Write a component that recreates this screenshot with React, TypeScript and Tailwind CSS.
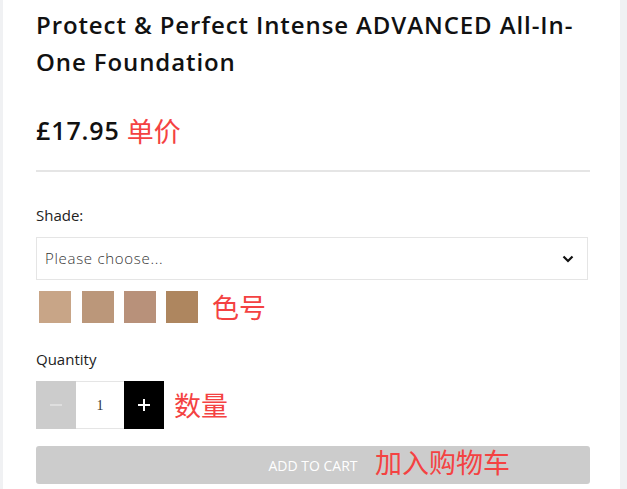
import React from "react";

const red = "text-[#f44242]";
const cjk = "font-['Noto_Sans_CJK_SC',sans-serif]";

export default function App() {
  return (
    <div className="w-full h-[489px] bg-[#f0f1f3] flex overflow-hidden font-['Open_Sans',sans-serif]">
      <div className="ml-[3px] w-[617px] h-full bg-white pl-[33px] pr-[30px] pt-[6px]">
        <h1 className="text-[24px] leading-[37px] font-semibold text-[#111] tracking-[0.9px]">
          Protect &amp; Perfect Intense ADVANCED All-In-One Foundation
        </h1>
        <div className="mt-[33px] flex items-center h-[36px]">
          <span className="text-[25px] font-semibold text-[#111] tracking-[0.9px]">£17.95</span>
          <span className={`ml-[7px] text-[27px] ${red} ${cjk}`}>单价</span>
        </div>
        <div className="mt-[21px] h-[2px] bg-[#e5e5e5]" />
        <div className="mt-[33px] text-[15px] text-[#222] leading-[20px]">Shade:</div>
        <div className="mt-[12px] mr-[2px] h-[43px] border border-[#e5e5e5] flex items-center justify-between pl-[8px] pr-[13px]">
          <span className="text-[15px] font-light text-[#333] tracking-[0.7px]">Please choose...</span>
          <svg width="12" height="8" viewBox="0 0 12 8" fill="none">
            <path d="M1.5 1.5 L6 6 L10.5 1.5" stroke="#111" strokeWidth="2.2" />
          </svg>
        </div>
        <div className="mt-[11px] flex items-center">
          <div className="ml-[3px] w-[32px] h-[32px] bg-[#c8a587]" />
          <div className="ml-[11px] w-[32px] h-[32px] bg-[#bb977a]" />
          <div className="ml-[10px] w-[32px] h-[32px] bg-[#b8917a]" />
          <div className="ml-[10px] w-[32px] h-[32px] bg-[#ae865f]" />
          <span className={`ml-[14px] text-[27px] leading-[32px] ${red} ${cjk}`}>色号</span>
        </div>
        <div className="mt-[26px] text-[15px] text-[#222] leading-[20px]">Quantity</div>
        <div className="mt-[12px] flex items-center">
          <div className="w-[40px] h-[48px] bg-[#cccccc] flex items-center justify-center">
            <div className="w-[12px] h-[2px] bg-[#dedede]" />
          </div>
          <div className="w-[48px] h-[48px] border-y border-[#e5e5e5] flex items-center justify-center text-[14px] text-[#333] font-['Liberation_Serif',serif]">
            1
          </div>
          <div className="w-[40px] h-[48px] bg-black flex items-center justify-center">
            <svg width="14" height="14" viewBox="0 0 14 14">
              <path d="M7 1 V13 M1 7 H13" stroke="#fff" strokeWidth="2" />
            </svg>
          </div>
          <span className={`ml-[10px] text-[27px] ${red} ${cjk}`}>数量</span>
        </div>
        <div className="relative mt-[17px] h-[38px] rounded-[3px] bg-[#cccccc] flex items-center justify-center">
          <span className="text-[14px] text-white">ADD TO CART</span>
          <span className={`absolute left-[339px] top-[-3px] text-[27px] leading-[38px] ${red} ${cjk}`}>加入购物车</span>
        </div>
      </div>
    </div>
  );
}
